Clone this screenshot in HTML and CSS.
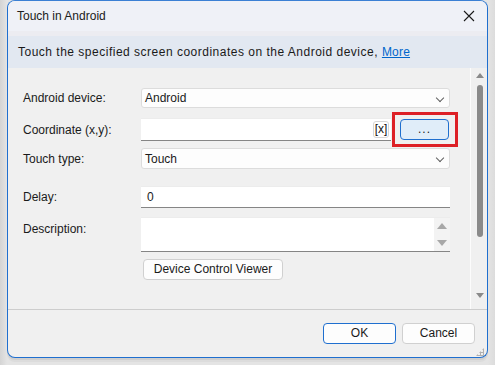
FILE: index.html
```html
<!DOCTYPE html>
<html>
<head>
    <meta charset="utf-8">
    <title>Touch in Android</title>
    <link rel="stylesheet" href="styles.css">
</head>
<body>
    <div class="desk">
        <div class="window">
            <div class="titlebar">
                <span class="title">Touch in Android</span>
                <svg class="close" width="12" height="12" viewBox="0 0 12 12">
                    <path d="M1 1L11 11M11 1L1 11" stroke="#1a1a1a" stroke-width="1.1" fill="none"/>
                </svg>
            </div>
            <div class="gap"></div>
            <div class="info">Touch the specified screen coordinates on the Android device, <a href="javascript:;">More</a></div>

            <div class="scroller">
                <div class="form">
                    <div class="row r1">
                        <label>Android device:</label>
                        <div class="select">Android<span class="chev"></span></div>
                    </div>
                    <div class="row r2">
                        <label>Coordinate (x,y):</label>
                        <div class="coord">
                            <div class="textbox"><span class="clear">[x]</span></div>
                            <div class="pick">...</div>
                            <div class="mark"></div>
                        </div>
                    </div>
                    <div class="row r3">
                        <label>Touch type:</label>
                        <div class="select">Touch<span class="chev"></span></div>
                    </div>
                    <div class="row r4">
                        <label>Delay:</label>
                        <div class="textbox">0</div>
                    </div>
                    <div class="row r5">
                        <label>Description:</label>
                        <div class="textbox area">
                            <div class="spin">
                                <span class="up"></span>
                                <span class="down"></span>
                            </div>
                        </div>
                    </div>
                    <div class="row r6">
                        <label></label>
                        <div class="btn viewer">Device Control Viewer</div>
                    </div>
                </div>
                <div class="vscroll">
                    <span class="up"></span>
                    <span class="thumb"></span>
                    <span class="down"></span>
                </div>
            </div>

            <div class="footer">
                <div class="btn ok">OK</div>
                <div class="btn">Cancel</div>
                <span class="grip"></span>
            </div>
        </div>
    </div>
</body>
</html>
```

FILE: styles.css
```css
html,
body {
    margin: 0;
    padding: 0;
    overflow: hidden;
}

body {
    width: 495px;
    height: 365px;
    background: linear-gradient(to right, #d4d4d4 0, #e4e4e4 7px, #e4e4e4 488px, #dcdcdc 495px);
    font: 12px "Liberation Sans", Arial, sans-serif;
    color: #1a1a1a;
}

.desk {
    padding: 0 7px 0 7px;
}

.window {
    position: relative;
    height: 356px;
    border: 1px solid #1f6fcf;
    border-top-color: #3b80d4;
    border-radius: 8px;
    background: #f0f0f0;
    overflow: hidden;
    box-shadow: 0 2px 0 #cfcfcf, 0 4px 0 #dcdcdc;
}

.titlebar {
    height: 30px;
    background: #eff1f7;
    display: flex;
    align-items: center;
    justify-content: space-between;
    padding: 0 9px 0 9px;
}

.title {
    font-size: 12px;
    color: #202020;
}

.close {
    margin-right: 3px;
}

.gap {
    height: 5px;
    background: #ececf1;
}

.info {
    height: 32px;
    line-height: 32px;
    background: #e2e8f1;
    padding-left: 10px;
    letter-spacing: 0.5px;
    color: #1a1a1a;
}

.info a {
    color: #0066cc;
    letter-spacing: 0.2px;
}

.scroller {
    height: 241px;
    display: flex;
    border-bottom: 1px solid #cdcdcd;
}

.form {
    flex: 1;
    padding: 20px 20px 0 15px;
}

.row {
    display: flex;
    align-items: center;
}

.row label {
    width: 118px;
    flex: none;
    color: #1a1a1a;
}

.r1 { height: 20px; }
.r2 { height: 23px; margin-top: 10px; }
.r3 { height: 21px; margin-top: 7px; }
.r4 { height: 22px; margin-top: 17px; }
.r5 { height: 35px; margin-top: 9px; align-items: flex-start; }
.r5 label { padding-top: 5px; }
.r6 { height: 21px; margin-top: 7px; }

.select {
    flex: 1;
    height: 100%;
    box-sizing: border-box;
    background: #fdfdfd;
    border: 1px solid #dcdcdc;
    border-radius: 3px;
    padding-left: 3px;
    display: flex;
    align-items: center;
    position: relative;
}

.chev {
    position: absolute;
    right: 6px;
    top: 6px;
    width: 5px;
    height: 5px;
    border-right: 1px solid #606060;
    border-bottom: 1px solid #606060;
    transform: rotate(45deg);
}

.textbox {
    flex: 1;
    height: 100%;
    box-sizing: border-box;
    background: #fff;
    border-top: 1px solid #ececec;
    border-bottom: 1px solid #858585;
    padding-left: 6px;
    display: flex;
    align-items: center;
    position: relative;
}

.coord {
    flex: 1;
    height: 100%;
    display: flex;
    align-items: center;
    position: relative;
}

.coord .textbox {
    justify-content: flex-end;
    padding-right: 2px;
}

.clear {
    width: 16px;
    height: 17px;
    box-sizing: border-box;
    border: 1px solid #d6d6d6;
    border-radius: 3px;
    font-size: 12px;
    line-height: 15px;
    text-align: center;
    color: #111;
}

.pick {
    width: 49px;
    height: 21px;
    box-sizing: border-box;
    margin-left: 9px;
    margin-right: 1px;
    background: #e0edf9;
    border: 1px solid #1f6fcf;
    border-radius: 4px;
    text-align: center;
    line-height: 19px;
    letter-spacing: 1px;
}

.mark {
    position: absolute;
    right: -8px;
    top: -6px;
    width: 60px;
    height: 29px;
    border: 3px solid #dd2026;
}

.area {
    align-items: flex-start;
}

.spin {
    position: absolute;
    right: 0;
    top: 0;
    bottom: 0;
    width: 16px;
    background: #f3f3f3;
    display: flex;
    flex-direction: column;
    justify-content: space-around;
    align-items: center;
}

.up,
.down {
    width: 0;
    height: 0;
    border-left: 5px solid transparent;
    border-right: 5px solid transparent;
}

.spin .up { border-bottom: 6px solid #a8a8a8; }
.spin .down { border-top: 6px solid #a8a8a8; }

.btn {
    height: 21px;
    box-sizing: border-box;
    background: #fdfdfd;
    border: 1px solid #d0d0d0;
    border-radius: 4px;
    text-align: center;
    line-height: 19px;
}

.viewer {
    width: 140px;
    margin-left: 2px;
}

.vscroll {
    width: 15px;
    border-left: 1px solid #fcfcfc;
    display: flex;
    flex-direction: column;
    align-items: center;
    padding-left: 1px;
}

.vscroll .up {
    margin-top: 5px;
    border-left-width: 4px;
    border-right-width: 4px;
    border-bottom: 5px solid #8a8a8a;
}

.vscroll .thumb {
    width: 6px;
    height: 152px;
    margin-top: 7px;
    border-radius: 3px;
    background: #8a8a8a;
}

.vscroll .down {
    margin-top: 56px;
    border-left-width: 4px;
    border-right-width: 4px;
    border-top: 5px solid #8a8a8a;
}

.footer {
    display: flex;
    justify-content: flex-end;
    gap: 6px;
    padding: 13px 12px 0 0;
    position: relative;
}

.footer .btn {
    width: 73px;
    height: 21px;
}

.ok {
    border-color: #1f6fcf;
}

.grip {
    position: absolute;
    right: 3px;
    bottom: -12px;
    width: 8px;
    height: 8px;
    background:
        radial-gradient(circle, #b0b0b0 1px, transparent 1.2px) 0 0 / 3px 3px;
    clip-path: polygon(100% 0, 100% 100%, 0 100%);
}
```
